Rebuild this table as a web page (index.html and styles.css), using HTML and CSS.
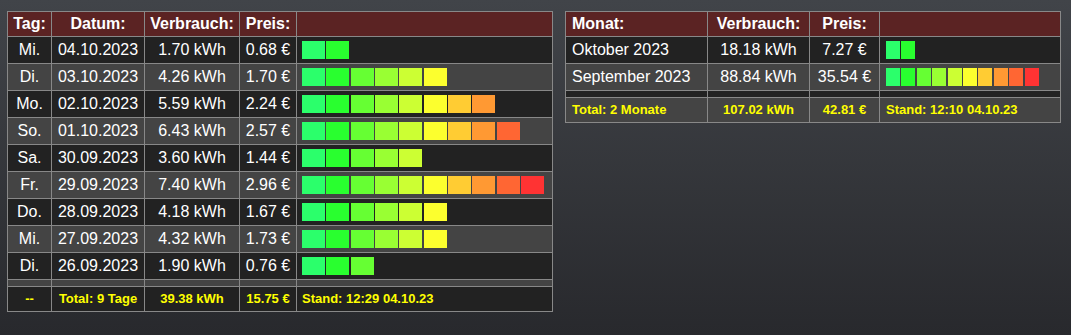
FILE: index.html
```html
<!DOCTYPE html>
<html lang="de">
<head>
<meta charset="utf-8">
<title>Verbrauch</title>
<link rel="stylesheet" href="styles.css">
</head>
<body>
<div class="page">
  <table class="tbl days">
    <colgroup>
      <col class="c-tag"><col class="c-datum"><col class="c-verb"><col class="c-preis"><col class="c-bar">
    </colgroup>
    <thead>
      <tr><th>Tag:</th><th>Datum:</th><th>Verbrauch:</th><th>Preis:</th><th></th></tr>
    </thead>
    <tbody>
      <tr class="odd"><td>Mi.</td><td>04.10.2023</td><td>1.70 kWh</td><td>0.68 €</td><td class="barcell"><div class="bar"><span class="s1"></span><span class="s2"></span></div></td></tr>
      <tr class="even"><td>Di.</td><td>03.10.2023</td><td>4.26 kWh</td><td>1.70 €</td><td class="barcell"><div class="bar"><span class="s1"></span><span class="s2"></span><span class="s3"></span><span class="s4"></span><span class="s5"></span><span class="s6"></span></div></td></tr>
      <tr class="odd"><td>Mo.</td><td>02.10.2023</td><td>5.59 kWh</td><td>2.24 €</td><td class="barcell"><div class="bar"><span class="s1"></span><span class="s2"></span><span class="s3"></span><span class="s4"></span><span class="s5"></span><span class="s6"></span><span class="s7"></span><span class="s8"></span></div></td></tr>
      <tr class="even"><td>So.</td><td>01.10.2023</td><td>6.43 kWh</td><td>2.57 €</td><td class="barcell"><div class="bar"><span class="s1"></span><span class="s2"></span><span class="s3"></span><span class="s4"></span><span class="s5"></span><span class="s6"></span><span class="s7"></span><span class="s8"></span><span class="s9"></span></div></td></tr>
      <tr class="odd"><td>Sa.</td><td>30.09.2023</td><td>3.60 kWh</td><td>1.44 €</td><td class="barcell"><div class="bar"><span class="s1"></span><span class="s2"></span><span class="s3"></span><span class="s4"></span><span class="s5"></span></div></td></tr>
      <tr class="even"><td>Fr.</td><td>29.09.2023</td><td>7.40 kWh</td><td>2.96 €</td><td class="barcell"><div class="bar"><span class="s1"></span><span class="s2"></span><span class="s3"></span><span class="s4"></span><span class="s5"></span><span class="s6"></span><span class="s7"></span><span class="s8"></span><span class="s9"></span><span class="s10"></span></div></td></tr>
      <tr class="odd"><td>Do.</td><td>28.09.2023</td><td>4.18 kWh</td><td>1.67 €</td><td class="barcell"><div class="bar"><span class="s1"></span><span class="s2"></span><span class="s3"></span><span class="s4"></span><span class="s5"></span><span class="s6"></span></div></td></tr>
      <tr class="even"><td>Mi.</td><td>27.09.2023</td><td>4.32 kWh</td><td>1.73 €</td><td class="barcell"><div class="bar"><span class="s1"></span><span class="s2"></span><span class="s3"></span><span class="s4"></span><span class="s5"></span><span class="s6"></span></div></td></tr>
      <tr class="odd"><td>Di.</td><td>26.09.2023</td><td>1.90 kWh</td><td>0.76 €</td><td class="barcell"><div class="bar"><span class="s1"></span><span class="s2"></span><span class="s3"></span></div></td></tr>
      <tr class="even spacer"><td></td><td></td><td></td><td></td><td></td></tr>
      <tr class="odd foot"><td>--</td><td>Total: 9 Tage</td><td>39.38 kWh</td><td>15.75 €</td><td class="stand">Stand: 12:29 04.10.23</td></tr>
    </tbody>
  </table>

  <table class="tbl months">
    <colgroup>
      <col class="m-monat"><col class="m-verb"><col class="m-preis"><col class="m-bar">
    </colgroup>
    <thead>
      <tr><th class="left">Monat:</th><th>Verbrauch:</th><th>Preis:</th><th></th></tr>
    </thead>
    <tbody>
      <tr class="odd"><td class="left">Oktober 2023</td><td>18.18 kWh</td><td>7.27 €</td><td class="barcell"><div class="bar"><span class="s1"></span><span class="s2"></span></div></td></tr>
      <tr class="even"><td class="left">September 2023</td><td>88.84 kWh</td><td>35.54 €</td><td class="barcell"><div class="bar"><span class="s1"></span><span class="s2"></span><span class="s3"></span><span class="s4"></span><span class="s5"></span><span class="s6"></span><span class="s7"></span><span class="s8"></span><span class="s9"></span><span class="s10"></span></div></td></tr>
      <tr class="odd spacer"><td></td><td></td><td></td><td></td></tr>
      <tr class="even foot"><td class="left">Total: 2 Monate</td><td>107.02 kWh</td><td>42.81 €</td><td class="stand">Stand: 12:10 04.10.23</td></tr>
    </tbody>
  </table>
</div>
</body>
</html>
```
FILE: styles.css
```css
html, body {
  margin: 0;
  padding: 0;
  height: 100%;
}
body {
  background: linear-gradient(#414449, #28292d);
  font-family: "Liberation Sans", Arial, sans-serif;
  color: #ffffff;
}
.page {
  display: flex;
  align-items: flex-start;
  gap: 12px;
  padding: 11px 0 0 7px;
}
.tbl {
  border-collapse: collapse;
  table-layout: fixed;
  border: 1px solid #888;
}
.tbl th, .tbl td {
  border: 1px solid #888;
  text-align: center;
  white-space: nowrap;
  overflow: hidden;
  padding: 0 3px;
}
.tbl th {
  background: #5b2323;
  font-size: 16px;
  font-weight: bold;
  line-height: 18px;
  height: 24px;
  padding-top: 3px;
  padding-bottom: 3px;
  box-sizing: border-box;
}
.tbl td {
  font-size: 16px;
  line-height: 18px;
  padding-top: 4px;
  padding-bottom: 4px;
}
.tbl tr.odd td { background: #222222; }
.tbl tr.even td { background: #444444; }
.tbl tr.spacer td {
  padding: 0;
  height: 6px;
  line-height: 6px;
  font-size: 1px;
}
.tbl tr.foot td {
  color: #ffff00;
  font-size: 13px;
  font-weight: bold;
  line-height: 16px;
}
.tbl .left { text-align: left; padding-left: 6px; }
.tbl td.stand { text-align: left; padding-left: 5px; }
.tbl td.barcell { text-align: left; padding-left: 5px; }

.days { width: 546px; }
.c-tag { width: 44px; }
.c-datum { width: 93px; }
.c-verb { width: 95px; }
.c-preis { width: 57px; }
.c-bar { width: 256px; }

.months { width: 496px; }
.m-monat { width: 142px; }
.m-verb { width: 102px; }
.m-preis { width: 70px; }
.m-bar { width: 181px; }
.months td.barcell, .months td.stand { padding-left: 6px; }

.bar {
  display: flex;
  height: 18px;
}
.bar span {
  display: block;
  height: 18px;
  flex: none;
}
.days .bar span { width: 23px; margin-right: 1.33px; }
.months .bar span { width: 14px; margin-right: 1.4px; }
.s1 { background: #2bff6b; }
.s2 { background: #29ff2f; }
.s3 { background: #66ff33; }
.s4 { background: #99ff33; }
.s5 { background: #ccff33; }
.s6 { background: #fcff2e; }
.s7 { background: #ffcc33; }
.s8 { background: #ff9933; }
.s9 { background: #ff6633; }
.s10 { background: #ff3333; }
```
